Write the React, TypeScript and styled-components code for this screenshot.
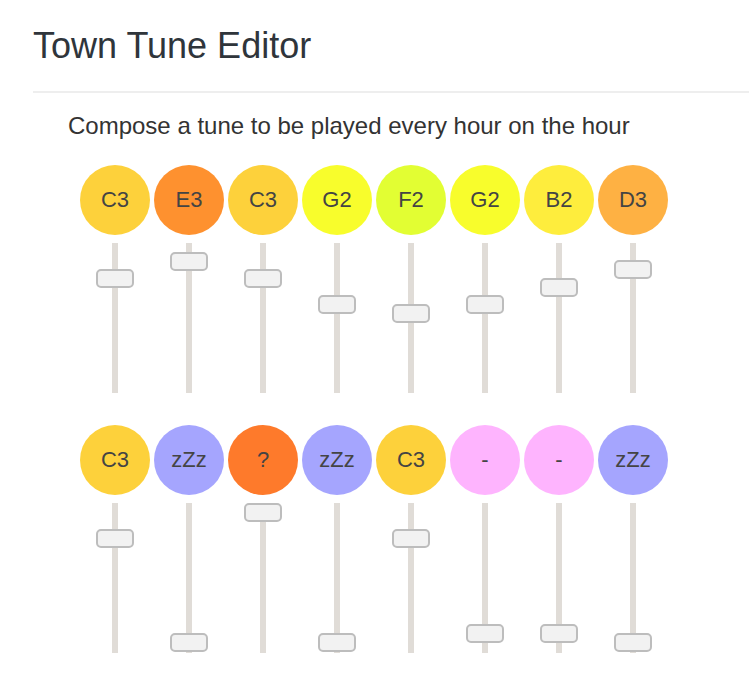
import React from "react";
import styled, { createGlobalStyle } from "styled-components";

const GlobalStyle = createGlobalStyle`
  html, body {
    margin: 0;
    padding: 0;
    background: #ffffff;
  }
  body {
    font-family: "Liberation Sans", Arial, Helvetica, sans-serif;
    color: #333333;
  }
`;

const Page = styled.div`
  padding-left: 33px;
`;

const Header = styled.header`
  padding-top: 26px;
  padding-bottom: 25px;
  border-bottom: 2px solid #eeeeee;
`;

const Title = styled.h1`
  margin: 0;
  font-size: 36px;
  line-height: 40px;
  font-weight: 400;
  color: #2f353b;
`;

const Content = styled.main`
  padding-left: 35px;
  padding-top: 18px;
`;

const Lead = styled.p`
  margin: 0 0 24px 0;
  font-size: 24px;
  line-height: 30px;
  color: #333333;
`;

const Rows = styled.div`
  display: flex;
  flex-direction: column;
  gap: 32px;
  padding-left: 12px;
`;

const Row = styled.div`
  display: flex;
  gap: 4px;
`;

const Column = styled.div`
  width: 70px;
  display: flex;
  flex-direction: column;
  align-items: center;
  gap: 8px;
`;

const Note = styled.div<{ $color: string }>`
  width: 70px;
  height: 70px;
  border-radius: 50%;
  background: ${(p) => p.$color};
  display: flex;
  align-items: center;
  justify-content: center;
  font-size: 22px;
  color: #444444;
`;

const Track = styled.div`
  position: relative;
  width: 6px;
  height: 150px;
  background: #e0dcd7;
`;

const Thumb = styled.div<{ $offset: number }>`
  position: absolute;
  left: 50%;
  top: ${(p) => p.$offset}px;
  transform: translateX(-50%);
  width: 38px;
  height: 19px;
  box-sizing: border-box;
  border: 2px solid #bdbdbd;
  border-radius: 5px;
  background: #f2f2f2;
`;

const SCALE = ["zZz", "-", "G1", "A1", "B1", "C2", "D2", "E2", "F2", "G2", "A2", "B2", "C3", "D3", "E3", "?"];

const COLORS: Record<string, string> = {
  C3: "#fdd13b",
  E3: "#fe912f",
  G2: "#f8fd2c",
  F2: "#e2fe33",
  B2: "#feed3d",
  D3: "#feb143",
  zZz: "#a5a5fe",
  "?": "#fe7a2b",
  "-": "#feb4fe",
};

const rows: string[][] = [
  ["C3", "E3", "C3", "G2", "F2", "G2", "B2", "D3"],
  ["C3", "zZz", "?", "zZz", "C3", "-", "-", "zZz"],
];

const label = (n: string) => (n === "zZz" ? "zZz" : n);

const Slot: React.FC<{ note: string }> = ({ note }) => {
  const v = SCALE.indexOf(note);
  const offset = ((SCALE.length - 1 - v) / (SCALE.length - 1)) * 130;
  return (
    <Column>
      <Note $color={COLORS[note]}>{label(note)}</Note>
      <Track>
        <Thumb $offset={offset} />
      </Track>
    </Column>
  );
};

export default function App() {
  return (
    <>
      <GlobalStyle />
      <Page>
        <Header>
          <Title>Town Tune Editor</Title>
        </Header>
        <Content>
          <Lead>Compose a tune to be played every hour on the hour</Lead>
          <Rows>
            {rows.map((r, i) => (
              <Row key={i}>
                {r.map((n, j) => (
                  <Slot key={j} note={n} />
                ))}
              </Row>
            ))}
          </Rows>
        </Content>
      </Page>
    </>
  );
}
